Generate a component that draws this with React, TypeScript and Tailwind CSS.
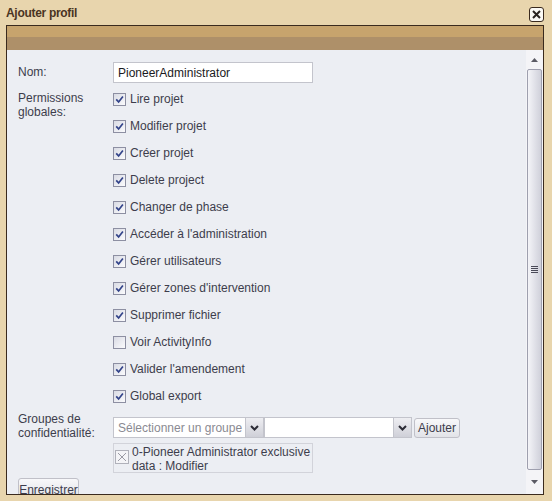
import React from "react";

const perms: [string, boolean][] = [
  ["Lire projet", true],
  ["Modifier projet", true],
  ["Créer projet", true],
  ["Delete project", true],
  ["Changer de phase", true],
  ["Accéder à l'administration", true],
  ["Gérer utilisateurs", true],
  ["Gérer zones d'intervention", true],
  ["Supprimer fichier", true],
  ["Voir ActivityInfo", false],
  ["Valider l'amendement", true],
  ["Global export", true],
];

function Check({ checked }: { checked: boolean }) {
  return (
    <span className="w-[13px] h-[13px] shrink-0 border border-[#8d8fa2] bg-gradient-to-br from-[#d9dbe4] to-[#fbfbfd] flex items-center justify-center">
      {checked && (
        <svg width="9" height="9" viewBox="0 0 9 9">
          <path d="M1.2 4.4 L3.6 6.9 L7.9 1.4" stroke="#33448a" strokeWidth="1.7" fill="none" />
        </svg>
      )}
    </span>
  );
}

function Chevron() {
  return (
    <svg width="9" height="6" viewBox="0 0 9 6">
      <path d="M1 1 L4.5 4.5 L8 1" stroke="#2b2b35" strokeWidth="2" fill="none" />
    </svg>
  );
}

function Select({ w, placeholder }: { w: string; placeholder?: string }) {
  return (
    <div className="flex h-[21px]">
      <div className={`${w} h-full bg-white border border-[#c3c4cc] pl-[4px] flex items-center overflow-hidden whitespace-nowrap text-[#8a8a92]`}>
        {placeholder}
      </div>
      <div className="w-[18px] h-full border border-l-0 border-[#c3c4cc] bg-gradient-to-b from-[#eeeef2] to-[#cfd0d8] flex items-center justify-center">
        <Chevron />
      </div>
    </div>
  );
}

export default function App() {
  return (
    <div className="w-[552px] h-[501px] bg-[#e8d5ad] overflow-hidden font-['Liberation_Sans',Arial,sans-serif] text-[12px] text-[#3d3d4c]">
      <div className="h-[25px] flex items-center justify-between pl-[6px] pr-[8px]">
        <span className="text-[12px] font-bold tracking-[-0.3px] text-[#4a3423]">Ajouter profil</span>
        <span className="w-[15px] h-[15px] mt-[3px] rounded-[3px] border border-[#3a2a1e] bg-[#fbfaf6] flex items-center justify-center">
          <svg width="9" height="9" viewBox="0 0 9 9">
            <path d="M1 1 L8 8 M8 1 L1 8" stroke="#2a2420" strokeWidth="2" />
          </svg>
        </span>
      </div>

      <div className="ml-[6px] w-[538px] h-[470px] border border-[#3a2a1e] flex flex-col">
        <div className="h-[11px] bg-[#c7a46d]" />
        <div className="h-[13px] bg-[#ae9069]" />
        <div className="flex flex-1 min-h-0 bg-[#eceef3]">
          <div className="flex-1 overflow-hidden pl-[11px] pt-[12px]">
            <div className="flex">
              <div className="w-[95px] leading-[21px]">Nom:</div>
              <div className="w-[200px] h-[21px] bg-white border border-[#c3c4cc] pl-[4px] flex items-center text-[#1a1a22]">
                PioneerAdministrator
              </div>
            </div>

            <div className="flex mt-[8px]">
              <div className="w-[95px] leading-[14px]">
                Permissions
                <br />
                globales:
              </div>
              <div className="flex flex-col gap-[14px] pt-[2px]">
                {perms.map(([label, on]) => (
                  <div key={label} className="flex items-center h-[13px] gap-[4px]">
                    <Check checked={on} />
                    <span className="leading-[13px]">{label}</span>
                  </div>
                ))}
              </div>
            </div>

            <div className="flex mt-[9px]">
              <div className="w-[95px] leading-[14px]">
                Groupes de
                <br />
                confidentialité:
              </div>
              <div className="flex flex-col pt-[5px]">
                <div className="flex items-start">
                  <Select w="w-[133px]" placeholder="Sélectionner un groupe" />
                  <Select w="w-[130px]" />
                  <button className="ml-[2px] mt-[1px] h-[20px] w-[46px] rounded-[3px] border border-[#c0c0c8] bg-gradient-to-b from-[#f8f8fa] to-[#e2e3e8] text-[#3d3d4c] whitespace-nowrap">
                    Ajouter
                  </button>
                </div>
                <div className="mt-[5px] w-[200px] h-[30px] border border-[#d2d3da] flex items-start">
                  <span className="ml-[1px] mt-[6px] w-[14px] h-[14px] shrink-0 border border-[#b0b1ba] bg-[#f4f4f7] flex items-center justify-center">
                    <svg width="10" height="10" viewBox="0 0 10 10">
                      <path d="M1 1 L9 9 M9 1 L1 9" stroke="#9a9aa4" strokeWidth="1" />
                    </svg>
                  </span>
                  <div className="ml-[3px] leading-[14px] pt-[1px] whitespace-nowrap">
                    0-Pioneer Administrator exclusive
                    <br />
                    data : Modifier
                  </div>
                </div>
              </div>
            </div>

            <button className="mt-[5px] h-[21px] w-[61px] rounded-[3px] border border-[#c0c0c8] bg-gradient-to-b from-[#f8f8fa] to-[#e2e3e8] text-[#3d3d4c] leading-[22px] flex justify-center">
              Enregistrer
            </button>
          </div>

          <div className="w-[17px] bg-[#f4f4f7] flex flex-col items-center">
            <div className="h-[19px] flex items-center justify-center">
              <svg width="7" height="4" viewBox="0 0 7 4">
                <path d="M0 4 L3.5 0 L7 4 Z" fill="#5a5a64" />
              </svg>
            </div>
            <div className="w-[15px] h-[401px] rounded-[2px] border border-[#9e9fae] bg-gradient-to-r from-[#f4f4f8] to-[#cfd0da] flex flex-col items-center justify-center gap-[1px]">
              <span className="w-[7px] h-[1px] bg-[#4a4a58]" />
              <span className="w-[7px] h-[1px] bg-[#4a4a58]" />
              <span className="w-[7px] h-[1px] bg-[#4a4a58]" />
              <span className="w-[7px] h-[1px] bg-[#4a4a58]" />
            </div>
            <div className="flex-1 flex items-center justify-center">
              <svg width="7" height="4" viewBox="0 0 7 4">
                <path d="M0 0 L3.5 4 L7 0 Z" fill="#5a5a64" />
              </svg>
            </div>
          </div>
        </div>
      </div>
    </div>
  );
}
